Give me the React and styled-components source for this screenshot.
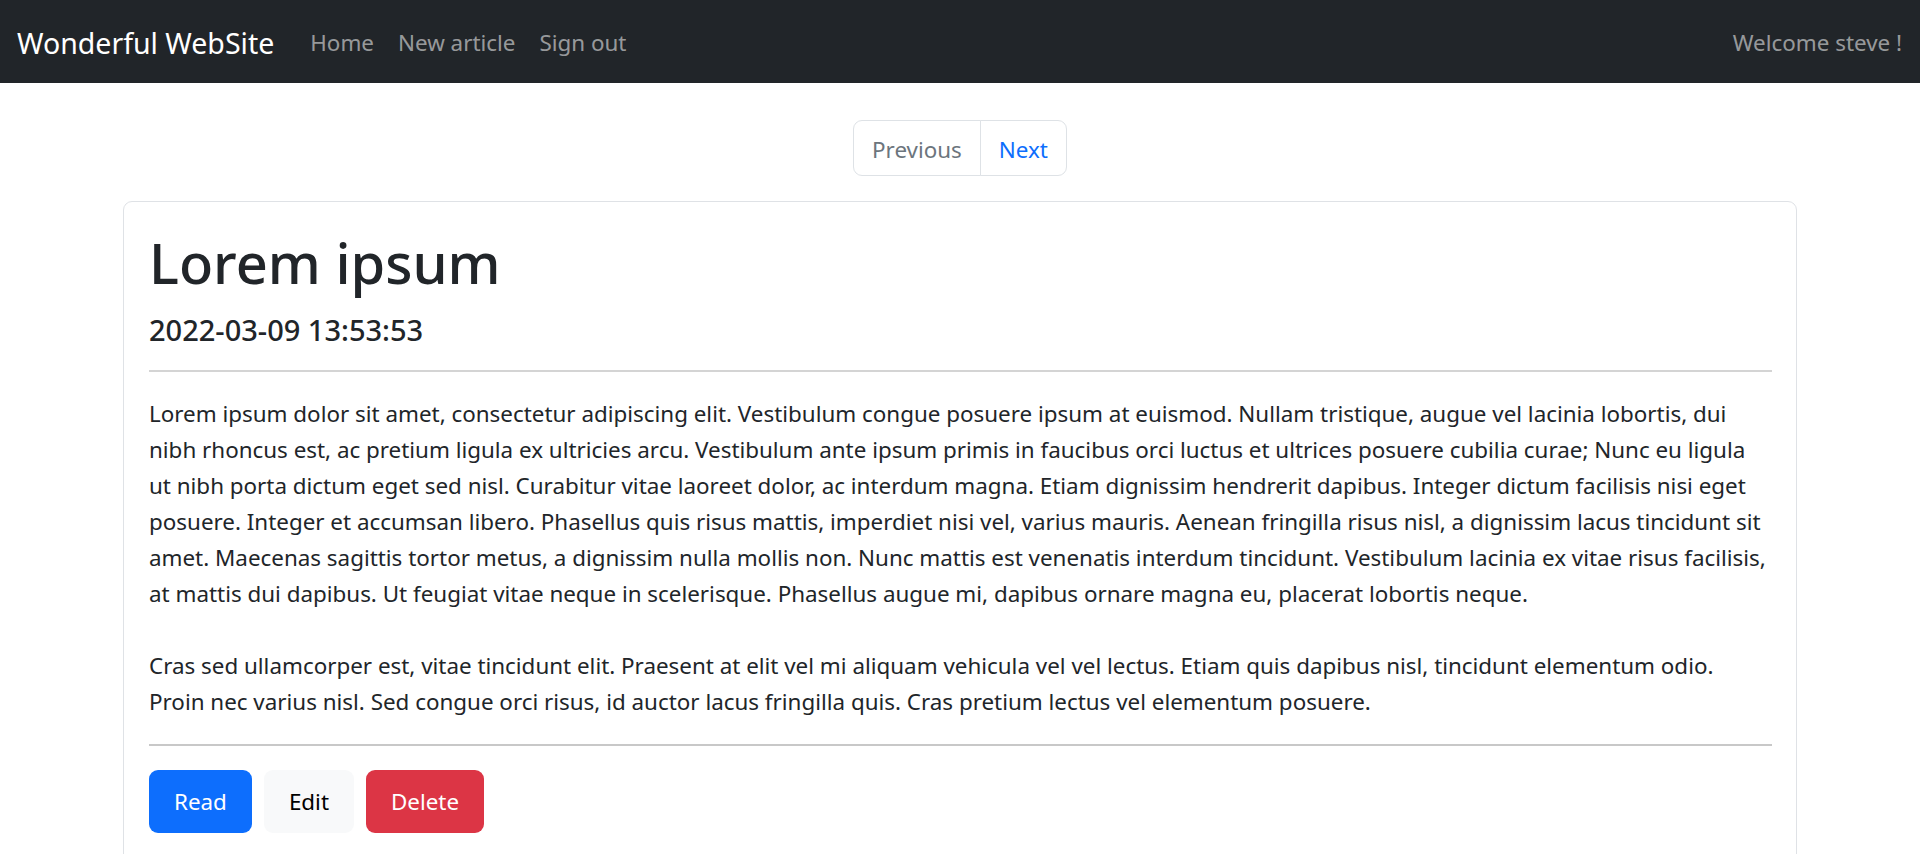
import React from 'react'
import styled, { createGlobalStyle } from 'styled-components'

const GlobalStyle = createGlobalStyle`
  * { box-sizing: border-box; }
  body {
    margin: 0;
    background: #fff;
    color: #212529;
    font-family: "Noto Sans", "Open Sans", sans-serif;
    font-size: 22.4px;
    line-height: 36px;
  }
`

const lines1 = [
  'Lorem ipsum dolor sit amet, consectetur adipiscing elit. Vestibulum congue posuere ipsum at euismod. Nullam tristique, augue vel lacinia lobortis, dui',
  'nibh rhoncus est, ac pretium ligula ex ultricies arcu. Vestibulum ante ipsum primis in faucibus orci luctus et ultrices posuere cubilia curae; Nunc eu ligula',
  'ut nibh porta dictum eget sed nisl. Curabitur vitae laoreet dolor, ac interdum magna. Etiam dignissim hendrerit dapibus. Integer dictum facilisis nisi eget',
  'posuere. Integer et accumsan libero. Phasellus quis risus mattis, imperdiet nisi vel, varius mauris. Aenean fringilla risus nisl, a dignissim lacus tincidunt sit',
  'amet. Maecenas sagittis tortor metus, a dignissim nulla mollis non. Nunc mattis est venenatis interdum tincidunt. Vestibulum lacinia ex vitae risus facilisis,',
  'at mattis dui dapibus. Ut feugiat vitae neque in scelerisque. Phasellus augue mi, dapibus ornare magna eu, placerat lobortis neque.',
]

const lines2 = [
  'Cras sed ullamcorper est, vitae tincidunt elit. Praesent at elit vel mi aliquam vehicula vel vel lectus. Etiam quis dapibus nisl, tincidunt elementum odio.',
  'Proin nec varius nisl. Sed congue orci risus, id auctor lacus fringilla quis. Cras pretium lectus vel elementum posuere.',
]

export default function App() {
  return (
    <>
      <GlobalStyle />
      <Navbar>
        <NavLeft>
          <Brand href="#">Wonderful WebSite</Brand>
          <NavLink href="#">Home</NavLink>
          <NavLink href="#">New article</NavLink>
          <NavLink href="#">Sign out</NavLink>
        </NavLeft>
        <Welcome>Welcome steve !</Welcome>
      </Navbar>

      <Main>
        <Pagination>
          <PageItem disabled>Previous</PageItem>
          <PageItem>Next</PageItem>
        </Pagination>

        <Card>
          <Title>Lorem ipsum</Title>
          <Date>2022-03-09 13:53:53</Date>
          <Rule />
          <Text>
            {lines1.map((l, i) => (
              <Line key={i}>{l}</Line>
            ))}
          </Text>
          <Text last>
            {lines2.map((l, i) => (
              <Line key={i}>{l}</Line>
            ))}
          </Text>
          <Rule strong />
          <Actions>
            <Button variant="primary">Read</Button>
            <Button variant="light">Edit</Button>
            <Button variant="danger">Delete</Button>
          </Actions>
        </Card>
      </Main>
    </>
  )
}

const Navbar = styled.nav`
  display: flex;
  align-items: center;
  justify-content: space-between;
  height: 83px;
  padding: 2px 18px 0 17px;
  background-color: #212529;
`

const NavLeft = styled.div`
  display: flex;
  align-items: center;
`

const Brand = styled.a`
  font-size: 28.5px;
  line-height: 42px;
  color: #fff;
  text-decoration: none;
  margin-right: 24px;
`

const NavLink = styled.a`
  padding: 0 12px;
  color: rgba(255, 255, 255, 0.55);
  text-decoration: none;
`

const Welcome = styled.span`
  color: rgba(255, 255, 255, 0.55);
`

const Main = styled.main`
  width: 1674px;
  margin: 0 auto;
  padding-top: 37px;
`

const Pagination = styled.ul`
  display: flex;
  justify-content: center;
  margin: 0 0 25px;
  padding: 0;
  list-style: none;
`

const PageItem = styled.li`
  padding: 11px 18px 7px;
  border: 1px solid #dee2e6;
  color: ${p => (p.disabled ? '#6c757d' : '#0d6efd')};

  &:first-child {
    border-radius: 9px 0 0 9px;
  }
  &:last-child {
    margin-left: -1px;
    border-radius: 0 9px 9px 0;
  }
`

const Card = styled.section`
  border: 1px solid #dfe2e6;
  border-radius: 9px;
  padding: 24px 24px 30px 25px;
`

const Title = styled.h1`
  margin: 0 0 14px;
  font-size: 56px;
  font-weight: 500;
  line-height: 72px;
`

const Date = styled.h5`
  margin: 0;
  font-size: 29px;
  font-weight: 500;
  line-height: 36px;
`

const Rule = styled.hr`
  margin: ${p => (p.strong ? '24px 0' : '22px 0 24px')};
  border: 0;
  border-top: 2px solid ${p => (p.strong ? '#c8c8c8' : '#d4d4d4')};
`

const Text = styled.p`
  margin: 0 0 ${p => (p.last ? '0' : '36px')};
`

const Line = styled.span`
  display: block;
  white-space: nowrap;
`

const colors = {
  primary: { bg: '#0d6efd', fg: '#fff' },
  light: { bg: '#f8f9fa', fg: '#000' },
  danger: { bg: '#dc3545', fg: '#fff' },
}

const Actions = styled.div`
  display: flex;
  gap: 12px;
`

const Button = styled.button`
  height: 63px;
  padding: 0 25px;
  border: 0;
  border-radius: 9px;
  font-family: inherit;
  font-size: 22.4px;
  background-color: ${p => colors[p.variant].bg};
  color: ${p => colors[p.variant].fg};
`
